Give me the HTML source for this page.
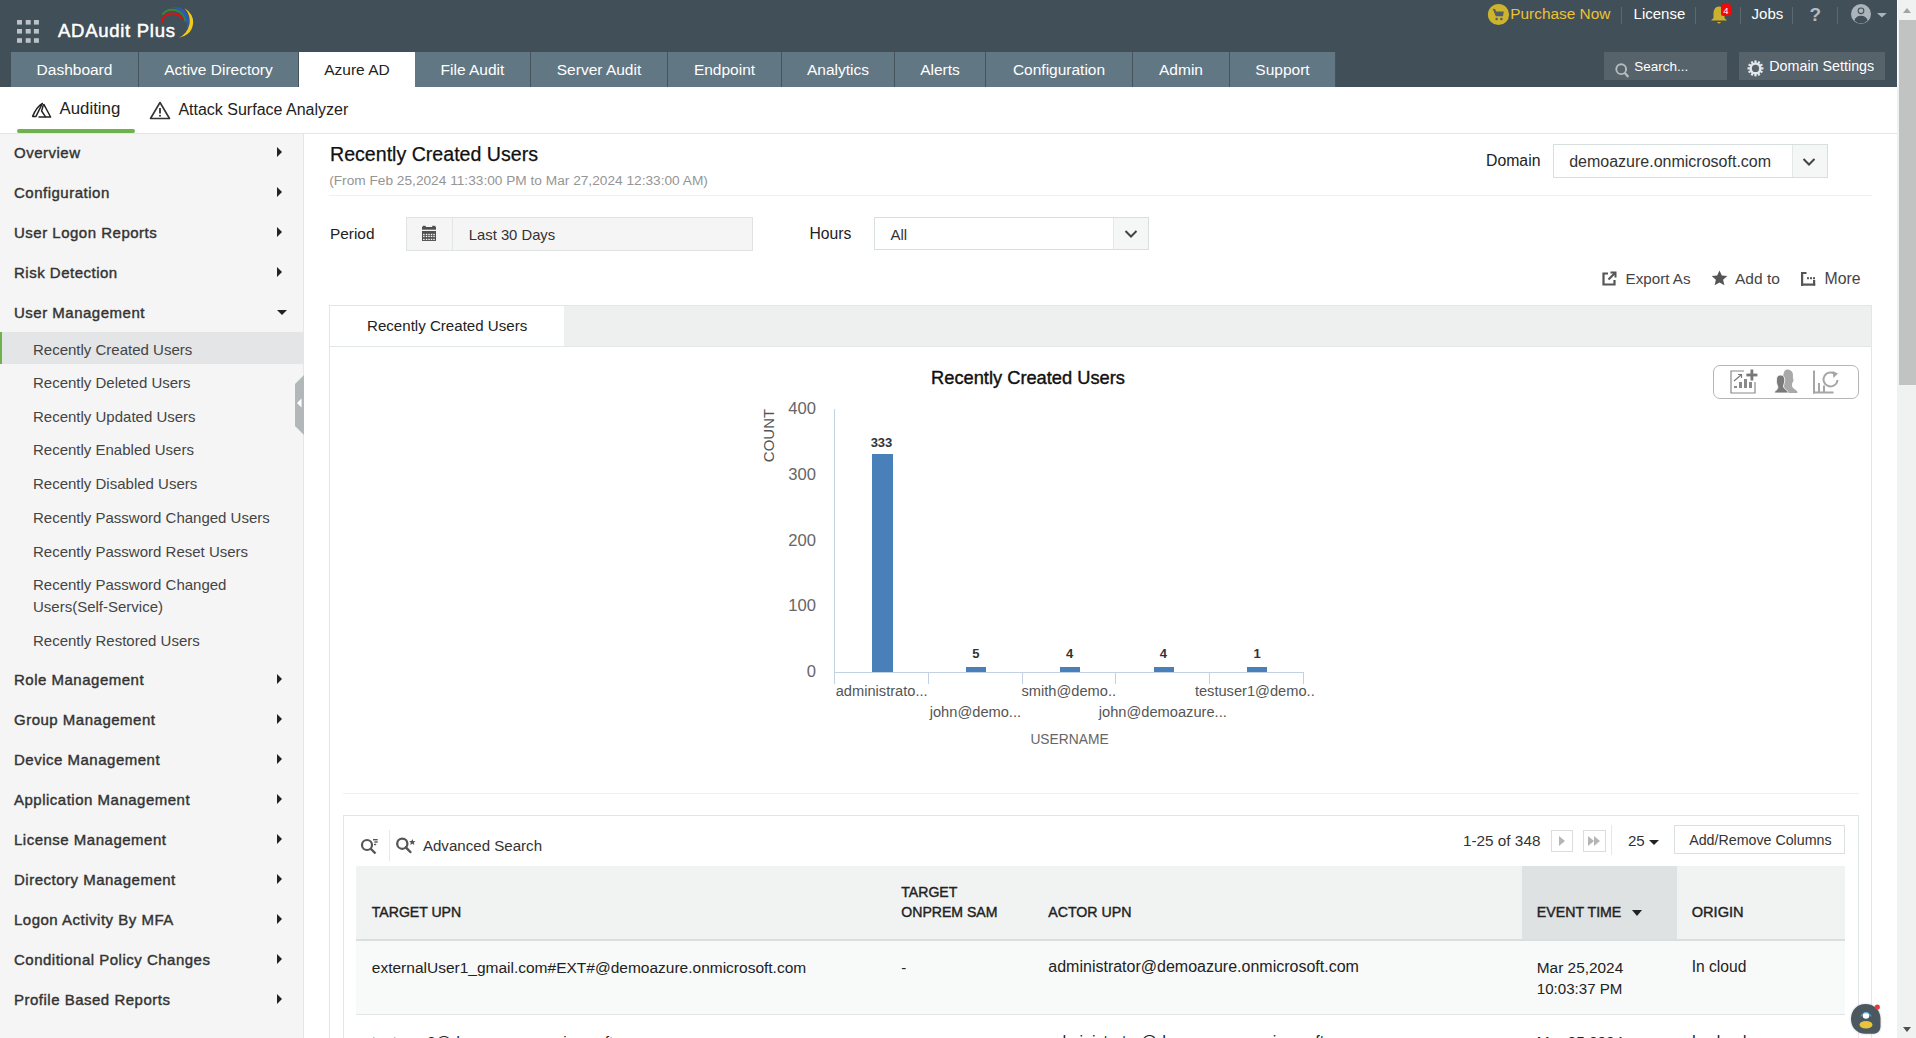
<!DOCTYPE html>
<html><head><meta charset="utf-8">
<style>
*{box-sizing:border-box;margin:0;padding:0}
html,body{width:1916px;height:1038px;overflow:hidden;background:#fff}
body{font-family:"Liberation Sans",sans-serif;position:relative;color:#222}
.a{position:absolute;line-height:1;white-space:nowrap}
.b{position:absolute}
#hdr{position:absolute;left:0;top:0;width:1897px;height:87px;background:#414f58}
.tab{position:absolute;top:52px;height:35px;background:#627784;color:#fff;font-size:15.5px;line-height:1;border-right:1px solid #45535c}
.tab span{position:absolute;top:62.1px;left:0;right:0;text-align:center}
.tab.on{background:#fff;color:#222;border-right:none}
#sb{position:absolute;left:1897px;top:0;width:19px;height:1038px;background:#f0f1f1}
#side{position:absolute;left:0;top:134px;width:304px;height:904px;background:#f5f5f5;border-right:1px solid #e3e7e8}
.arr{position:absolute;left:277px;width:0;height:0;border-top:5px solid transparent;border-bottom:5px solid transparent;border-left:5.5px solid #222}
</style></head>
<body>
<div id="hdr"></div>
<svg class="b" style="left:17px;top:20px" width="22" height="23" viewBox="0 0 22 23" fill="#bcc2c6"><rect x="0" y="0" width="5" height="4.6"/><rect x="8.7" y="0" width="5" height="4.6"/><rect x="16.9" y="0" width="5" height="4.6"/><rect x="0" y="9" width="5" height="4.6"/><rect x="8.7" y="9" width="5" height="4.6"/><rect x="16.9" y="9" width="5" height="4.6"/><rect x="0" y="18.2" width="5" height="4.6"/><rect x="8.7" y="18.2" width="5" height="4.6"/><rect x="16.9" y="18.2" width="5" height="4.6"/></svg>
<div class="a" style="left:58px;top:21.94px;font-size:18.5px;color:#fff;-webkit-text-stroke:0.5px #fff;letter-spacing:0.72px">ADAudit Plus</div>
<svg class="b" style="left:150px;top:0px" width="50" height="45" viewBox="150 0 50 45" fill="none">
<path d="M161.5 22.5 A11.3 11.3 0 0 1 182.3 19" stroke="#e01010" stroke-width="2"/>
<path d="M162.3 14.5 A13.2 13.2 0 0 1 185.5 21.5" stroke="#3a8a34" stroke-width="1.9"/>
<path d="M171.5 7.4 A14.1 14.1 0 0 1 186.4 29.5 A18 18 0 0 0 171.5 7.4Z" fill="#2a5db0"/>
<path d="M184.5 8.2 A15.6 15.6 0 0 1 178.6 37.7 A18.2 18.2 0 0 0 184.5 8.2Z" fill="#f2cc1a"/>
</svg>
<div class="tab" style="left:11px;width:128px"><span style="top:10.08px">Dashboard</span></div>
<div class="tab" style="left:139px;width:160px"><span style="top:10.08px">Active Directory</span></div>
<div class="tab on" style="left:299px;width:116px"><span style="top:10.08px">Azure AD</span></div>
<div class="tab" style="left:415px;width:116px"><span style="top:10.08px">File Audit</span></div>
<div class="tab" style="left:531px;width:137px"><span style="top:10.08px">Server Audit</span></div>
<div class="tab" style="left:668px;width:114px"><span style="top:10.08px">Endpoint</span></div>
<div class="tab" style="left:782px;width:113px"><span style="top:10.08px">Analytics</span></div>
<div class="tab" style="left:895px;width:91px"><span style="top:10.08px">Alerts</span></div>
<div class="tab" style="left:986px;width:147px"><span style="top:10.08px">Configuration</span></div>
<div class="tab" style="left:1133px;width:97px"><span style="top:10.08px">Admin</span></div>
<div class="tab" style="left:1230px;width:106px"><span style="top:10.08px">Support</span></div>
<svg class="b" style="left:1484px;top:0px" width="30" height="30" viewBox="1484 0 30 30">
<circle cx="1498.5" cy="14.5" r="10.6" fill="#cdb42e"/>
<path d="M1493 9.4 L1494.6 10 L1495.6 11.6 L1503.8 11.6 L1503 16.3 L1495.8 16.3 Z" fill="#505d66"/>
<path d="M1493 9.3 L1494.8 9.7 L1495.9 12" stroke="#505d66" stroke-width="1.1" fill="none"/>
<circle cx="1496.6" cy="18.9" r="1.25" fill="#505d66"/><circle cx="1501.4" cy="18.9" r="1.25" fill="#505d66"/>
</svg>
<div class="a" style="left:1510.3px;top:5.96px;font-size:15.4px;color:#ecc232">Purchase Now</div>
<div class="b" style="left:1621px;top:7px;width:1px;height:17px;background:#5c6870"></div>
<div class="a" style="left:1633.6px;top:6.30px;font-size:15px;color:#fff">License</div>
<div class="b" style="left:1695px;top:7px;width:1px;height:17px;background:#5c6870"></div>
<svg class="b" style="left:1710px;top:4px" width="24" height="21" viewBox="0 0 24 21">
<path d="M9 2.5 C4.5 2.5 3.5 7 3.5 10 L3.5 14 L1 16.5 L17 16.5 L14.5 14 L14.5 10 C14.5 7 13.5 2.5 9 2.5Z" fill="#cbb22e"/>
<path d="M7 18 Q9 21 11 18Z" fill="#cbb22e"/>
<rect x="11" y="0" width="10" height="12" rx="2.5" fill="#f00a0a"/>
<text x="16" y="9.8" font-family="Liberation Sans" font-size="9.5" fill="#fff" text-anchor="middle">4</text>
</svg>
<div class="b" style="left:1740px;top:7px;width:1px;height:17px;background:#5c6870"></div>
<div class="a" style="left:1751.6px;top:6.30px;font-size:15px;color:#fff">Jobs</div>
<div class="b" style="left:1792px;top:7px;width:1px;height:17px;background:#5c6870"></div>
<div class="a" style="left:1809.5px;top:5.12px;font-size:19px;color:#b4bcc1;font-weight:bold">?</div>
<div class="b" style="left:1837px;top:7px;width:1px;height:17px;background:#5c6870"></div>
<svg class="b" style="left:1850px;top:4px" width="38" height="21" viewBox="0 0 38 21">
<circle cx="11" cy="10" r="10" fill="#aab4ba"/>
<circle cx="11" cy="6.8" r="3.4" fill="#414f58"/>
<circle cx="11" cy="6.8" r="2.3" fill="#aab4ba"/>
<path d="M4.3 16.6 Q5.8 11.8 11 11.8 Q16.2 11.8 17.7 16.6 Q14.8 19.6 11 19.6 Q7.2 19.6 4.3 16.6Z" fill="#414f58"/>
<path d="M27 9 h9.8 l-4.9 4.6z" fill="#aab4ba"/>
</svg>
<div class="b" style="left:1604px;top:52px;width:123px;height:28px;background:#56636b"></div>
<svg class="b" style="left:1610px;top:58px" width="24" height="24" viewBox="1610 58 24 24">
<circle cx="1621.2" cy="69.2" r="4.9" stroke="#b5bbbe" stroke-width="1.9" fill="none"/>
<path d="M1624.6 72.8 L1628.4 77" stroke="#b5bbbe" stroke-width="2.3"/>
</svg>
<div class="a" style="left:1634.3px;top:59.57px;font-size:13.5px;color:#fff">Search...</div>
<div class="b" style="left:1739px;top:52px;width:146px;height:28px;background:#56636b"></div>
<svg class="b" style="left:1745px;top:58px" width="22" height="22" viewBox="1745 58 22 22">
<g fill="#e4e8ea"><circle cx="1755.5" cy="68.4" r="6"/><rect x="1754.4" y="60.4" width="2.2" height="3" transform="rotate(0 1755.5 68.4)"/><rect x="1754.4" y="60.4" width="2.2" height="3" transform="rotate(30 1755.5 68.4)"/><rect x="1754.4" y="60.4" width="2.2" height="3" transform="rotate(60 1755.5 68.4)"/><rect x="1754.4" y="60.4" width="2.2" height="3" transform="rotate(90 1755.5 68.4)"/><rect x="1754.4" y="60.4" width="2.2" height="3" transform="rotate(120 1755.5 68.4)"/><rect x="1754.4" y="60.4" width="2.2" height="3" transform="rotate(150 1755.5 68.4)"/><rect x="1754.4" y="60.4" width="2.2" height="3" transform="rotate(180 1755.5 68.4)"/><rect x="1754.4" y="60.4" width="2.2" height="3" transform="rotate(210 1755.5 68.4)"/><rect x="1754.4" y="60.4" width="2.2" height="3" transform="rotate(240 1755.5 68.4)"/><rect x="1754.4" y="60.4" width="2.2" height="3" transform="rotate(270 1755.5 68.4)"/><rect x="1754.4" y="60.4" width="2.2" height="3" transform="rotate(300 1755.5 68.4)"/><rect x="1754.4" y="60.4" width="2.2" height="3" transform="rotate(330 1755.5 68.4)"/></g>
<circle cx="1755.5" cy="68.4" r="3.6" fill="#56636b"/>
</svg>
<div class="a" style="left:1769.3px;top:58.90px;font-size:14.3px;color:#fff">Domain Settings</div>
<div class="b" style="left:0;top:133px;width:1897px;height:1px;background:#e3e6e8"></div>
<svg class="b" style="left:28px;top:98px" width="28" height="24" viewBox="28 98 28 24" fill="none" stroke="#222" stroke-width="1.45" stroke-linejoin="round" stroke-linecap="round">
<path d="M32.6 116.4 L36 116.4 L42.4 103.4 Q36.5 107 32.6 116.4 Z"/>
<path d="M44 104.6 L50.6 117 L39 117"/><path d="M45.4 116.6 L41.6 111 L43.4 104.8"/>
</svg>
<div class="a" style="left:59.6px;top:101.08px;font-size:16.8px;color:#222">Auditing</div>
<div class="b" style="left:17px;top:129px;width:118px;height:4px;border-radius:2px;background:#6eb24e"></div>
<svg class="b" style="left:149px;top:101px" width="22" height="19" viewBox="0 0 22 19" fill="none">
<path d="M11 1.5 L20.5 17.5 L1.5 17.5 Z" stroke="#333" stroke-width="1.6" stroke-linejoin="round"/>
<path d="M11 7 V12.5" stroke="#333" stroke-width="1.8"/><circle cx="11" cy="14.8" r="1" fill="#333"/>
</svg>
<div class="a" style="left:178.4px;top:101.76px;font-size:16px;color:#222">Attack Surface Analyzer</div>
<div id="side"></div>
<div class="a" style="left:14px;top:145.30px;font-size:15px;color:#333;-webkit-text-stroke:0.4px #333;letter-spacing:0.5px">Overview</div>
<div class="arr" style="top:147.4px"></div>
<div class="a" style="left:14px;top:185.30px;font-size:15px;color:#333;-webkit-text-stroke:0.4px #333;letter-spacing:0.5px">Configuration</div>
<div class="arr" style="top:187.4px"></div>
<div class="a" style="left:14px;top:225.30px;font-size:15px;color:#333;-webkit-text-stroke:0.4px #333;letter-spacing:0.5px">User Logon Reports</div>
<div class="arr" style="top:227.4px"></div>
<div class="a" style="left:14px;top:265.30px;font-size:15px;color:#333;-webkit-text-stroke:0.4px #333;letter-spacing:0.5px">Risk Detection</div>
<div class="arr" style="top:267.4px"></div>
<div class="a" style="left:14px;top:305.30px;font-size:15px;color:#333;-webkit-text-stroke:0.4px #333;letter-spacing:0.5px">User Management</div>
<div class="b" style="left:277px;top:310px;width:0;height:0;border-left:5.2px solid transparent;border-right:5.2px solid transparent;border-top:5.5px solid #222"></div>
<div class="b" style="left:0;top:332px;width:303px;height:32px;background:#e4e5e6;border-left:2px solid #6eb24e"></div>
<div class="a" style="left:33px;top:341.70px;font-size:15px;color:#444">Recently Created Users</div>
<div class="a" style="left:33px;top:374.90px;font-size:15px;color:#444">Recently Deleted Users</div>
<div class="a" style="left:33px;top:408.60px;font-size:15px;color:#444">Recently Updated Users</div>
<div class="a" style="left:33px;top:442.30px;font-size:15px;color:#444">Recently Enabled Users</div>
<div class="a" style="left:33px;top:476.10px;font-size:15px;color:#444">Recently Disabled Users</div>
<div class="a" style="left:33px;top:509.70px;font-size:15px;color:#444">Recently Password Changed Users</div>
<div class="a" style="left:33px;top:543.50px;font-size:15px;color:#444">Recently Password Reset Users</div>
<div class="a" style="left:33px;top:577.30px;font-size:15px;color:#444">Recently Password Changed</div>
<div class="a" style="left:33px;top:599.30px;font-size:15px;color:#444">Users(Self-Service)</div>
<div class="a" style="left:33px;top:633.30px;font-size:15px;color:#444">Recently Restored Users</div>
<div class="a" style="left:14px;top:672.30px;font-size:15px;color:#333;-webkit-text-stroke:0.4px #333;letter-spacing:0.5px">Role Management</div>
<div class="arr" style="top:674.4px"></div>
<div class="a" style="left:14px;top:712.30px;font-size:15px;color:#333;-webkit-text-stroke:0.4px #333;letter-spacing:0.5px">Group Management</div>
<div class="arr" style="top:714.4px"></div>
<div class="a" style="left:14px;top:752.30px;font-size:15px;color:#333;-webkit-text-stroke:0.4px #333;letter-spacing:0.5px">Device Management</div>
<div class="arr" style="top:754.4px"></div>
<div class="a" style="left:14px;top:792.30px;font-size:15px;color:#333;-webkit-text-stroke:0.4px #333;letter-spacing:0.5px">Application Management</div>
<div class="arr" style="top:794.4px"></div>
<div class="a" style="left:14px;top:832.30px;font-size:15px;color:#333;-webkit-text-stroke:0.4px #333;letter-spacing:0.5px">License Management</div>
<div class="arr" style="top:834.4px"></div>
<div class="a" style="left:14px;top:872.30px;font-size:15px;color:#333;-webkit-text-stroke:0.4px #333;letter-spacing:0.5px">Directory Management</div>
<div class="arr" style="top:874.4px"></div>
<div class="a" style="left:14px;top:912.30px;font-size:15px;color:#333;-webkit-text-stroke:0.4px #333;letter-spacing:0.5px">Logon Activity By MFA</div>
<div class="arr" style="top:914.4px"></div>
<div class="a" style="left:14px;top:952.30px;font-size:15px;color:#333;-webkit-text-stroke:0.4px #333;letter-spacing:0.5px">Conditional Policy Changes</div>
<div class="arr" style="top:954.4px"></div>
<div class="a" style="left:14px;top:992.30px;font-size:15px;color:#333;-webkit-text-stroke:0.4px #333;letter-spacing:0.5px">Profile Based Reports</div>
<div class="arr" style="top:994.4px"></div>
<svg class="b" style="left:295px;top:375px" width="9" height="60" viewBox="0 0 9 60">
<path d="M9 0 L9 60 L0 51 L0 9 Z" fill="#b2b7ba"/>
<path d="M6.5 23.5 L2 28 L6.5 32.5 Z" fill="#fff"/>
</svg>
<div class="a" style="left:330px;top:144.71px;font-size:19.6px;color:#111;-webkit-text-stroke:0.25px #111">Recently Created Users</div>
<div class="a" style="left:329.2px;top:173.70px;font-size:13.7px;color:#959595">(From Feb 25,2024 11:33:00 PM to Mar 27,2024 12:33:00 AM)</div>
<div class="b" style="left:329px;top:195px;width:1543px;height:1px;background:#eef1f1"></div>
<div class="a" style="left:1486px;top:153.13px;font-size:15.8px;color:#222">Domain</div>
<div class="b" style="left:1553px;top:144px;width:275px;height:34px;border:1px solid #d8dfdf;background:#fff"></div>
<div class="b" style="left:1792px;top:145px;width:35px;height:32px;border-left:1px solid #e3e8e8;background:#f5f6f6"></div>
<div class="a" style="left:1569.2px;top:153.66px;font-size:16px;color:#333">demoazure.onmicrosoft.com</div>
<svg class="b" style="left:1802px;top:156.5px" width="14" height="10" viewBox="0 0 14 10"><path d="M1.5 2 L7 7.5 L12.5 2" stroke="#444" stroke-width="2" fill="none"/></svg>
<div class="a" style="left:330px;top:226.06px;font-size:15.4px;color:#222">Period</div>
<div class="b" style="left:406px;top:217px;width:347px;height:34px;border:1px solid #dfe3e3;background:#f5f5f5"></div>
<div class="b" style="left:452px;top:218px;width:1px;height:32px;background:#e3e6e6"></div>
<svg class="b" style="left:422px;top:225px" width="14" height="16" viewBox="0 0 14 16">
<g fill="#505050"><rect x="0.6" y="0.8" width="3.2" height="1.4"/><rect x="10.2" y="0.8" width="3.2" height="1.4"/>
<rect x="0" y="2" width="14" height="2.7"/><rect x="0" y="6" width="14" height="10"/></g>
<g fill="#f5f5f5"><rect x="1.1" y="8.8" width="1.5" height="1.3"/><rect x="3.8" y="8.8" width="1.5" height="1.3"/><rect x="6.3" y="8.8" width="1.5" height="1.3"/><rect x="8.8" y="8.8" width="1.5" height="1.3"/><rect x="11.3" y="8.8" width="1.5" height="1.3"/><rect x="1.1" y="10.8" width="1.5" height="1.3"/><rect x="3.8" y="10.8" width="1.5" height="1.3"/><rect x="6.3" y="10.8" width="1.5" height="1.3"/><rect x="8.8" y="10.8" width="1.5" height="1.3"/><rect x="11.3" y="10.8" width="1.5" height="1.3"/><rect x="1.1" y="13.8" width="1.5" height="1.3"/><rect x="3.8" y="13.8" width="1.5" height="1.3"/><rect x="6.3" y="13.8" width="1.5" height="1.3"/><rect x="8.8" y="13.8" width="1.5" height="1.3"/><rect x="11.3" y="13.8" width="1.5" height="1.3"/></g>
</svg>
<div class="a" style="left:468.8px;top:227.57px;font-size:14.8px;color:#333">Last 30 Days</div>
<div class="a" style="left:809.4px;top:226.21px;font-size:15.7px;color:#222">Hours</div>
<div class="b" style="left:874px;top:217px;width:275px;height:33px;border:1px solid #d8dfdf;background:#fff"></div>
<div class="b" style="left:1113px;top:218px;width:35px;height:31px;border-left:1px solid #e3e8e8;background:#f5f6f6"></div>
<div class="a" style="left:890.4px;top:227.30px;font-size:15px;color:#333">All</div>
<svg class="b" style="left:1124px;top:229px" width="14" height="10" viewBox="0 0 14 10"><path d="M1.5 2 L7 7.5 L12.5 2" stroke="#444" stroke-width="2" fill="none"/></svg>
<svg class="b" style="left:1602px;top:271px" width="15" height="15" viewBox="0 0 15 15" fill="none" stroke="#555" stroke-width="2.2">
<path d="M6 2.5 H1.5 V13.5 H12.5 V9"/><path d="M6.5 8.5 L13 2"/><path d="M8.5 1.5 H13.5 V6.5" stroke-width="2"/>
</svg>
<div class="a" style="left:1625.6px;top:271.13px;font-size:15.2px;color:#444">Export As</div>
<svg class="b" style="left:1711px;top:270px" width="17" height="16" viewBox="0 0 17 16"><path d="M8.5 0.5 L10.8 5.6 L16.3 6.1 L12.1 9.8 L13.4 15.3 L8.5 12.4 L3.6 15.3 L4.9 9.8 L0.7 6.1 L6.2 5.6 Z" fill="#555"/></svg>
<div class="a" style="left:1735px;top:270.88px;font-size:15.5px;color:#444">Add to</div>
<svg class="b" style="left:1801px;top:272px" width="15" height="14" viewBox="0 0 15 14" fill="#555">
<rect x="0" y="0" width="2.2" height="14"/><rect x="0" y="0" width="5.5" height="2"/><rect x="0" y="11.5" width="14.2" height="2.2"/><rect x="12" y="8" width="2.2" height="5.5"/>
<rect x="6" y="5.2" width="2" height="2"/><rect x="9" y="5.2" width="2" height="2"/><rect x="12" y="5.2" width="2" height="2"/>
</svg>
<div class="a" style="left:1824.5px;top:270.63px;font-size:15.8px;color:#444">More</div>
<div class="b" style="left:329px;top:305px;width:1543px;height:740px;border:1px solid #e1e6e7;border-bottom:none;background:#fff"></div>
<div class="b" style="left:564px;top:306px;width:1307px;height:40px;background:#eef0f0"></div>
<div class="b" style="left:330px;top:346px;width:1541px;height:1px;background:#e1e6e6"></div>
<div class="a" style="left:367px;top:318.22px;font-size:15.1px;color:#222">Recently Created Users</div>
<div class="a" style="left:728px;width:600px;text-align:center;top:369.33px;font-size:18.28px;color:#111;-webkit-text-stroke:0.4px #111">Recently Created Users</div>
<div class="b" style="left:834px;top:409px;width:1px;height:275px;background:#c3d2e2"></div>
<div class="b" style="left:834px;top:672px;width:470px;height:1px;background:#c3d2e2"></div>
<div class="b" style="left:928px;top:672px;width:1px;height:12px;background:#c3d2e2"></div>
<div class="b" style="left:1022px;top:672px;width:1px;height:12px;background:#c3d2e2"></div>
<div class="b" style="left:1115px;top:672px;width:1px;height:12px;background:#c3d2e2"></div>
<div class="b" style="left:1209px;top:672px;width:1px;height:12px;background:#c3d2e2"></div>
<div class="b" style="left:1303px;top:672px;width:1px;height:12px;background:#c3d2e2"></div>
<div class="a" style="left:616px;width:200px;text-align:right;top:400.95px;font-size:16.6px;color:#666">400</div>
<div class="a" style="left:616px;width:200px;text-align:right;top:466.75px;font-size:16.6px;color:#666">300</div>
<div class="a" style="left:616px;width:200px;text-align:right;top:532.75px;font-size:16.6px;color:#666">200</div>
<div class="a" style="left:616px;width:200px;text-align:right;top:597.95px;font-size:16.6px;color:#666">100</div>
<div class="a" style="left:616px;width:200px;text-align:right;top:663.95px;font-size:16.6px;color:#666">0</div>
<div class="a" style="left:742.6px;top:428px;width:54px;text-align:center;font-size:15px;color:#555;transform:rotate(-90deg);transform-origin:27px 7.5px;left:741.2px;top:428.3px">COUNT</div>
<div class="b" style="left:872.2px;top:454px;width:20.4px;height:218px;background:#4a80ba"></div>
<div class="b" style="left:966px;top:667px;width:20px;height:5px;background:#4a80ba"></div>
<div class="b" style="left:1060px;top:667px;width:20px;height:5px;background:#4a80ba"></div>
<div class="b" style="left:1153.5px;top:667px;width:20px;height:5px;background:#4a80ba"></div>
<div class="b" style="left:1247px;top:667px;width:20px;height:5px;background:#4a80ba"></div>
<div class="a" style="left:581.5px;width:600px;text-align:center;top:435.80px;font-size:13px;font-weight:bold;color:#333">333</div>
<div class="a" style="left:675.8px;width:600px;text-align:center;top:647.20px;font-size:13px;font-weight:bold;color:#333">5</div>
<div class="a" style="left:769.7px;width:600px;text-align:center;top:647.20px;font-size:13px;font-weight:bold;color:#333">4</div>
<div class="a" style="left:863.4000000000001px;width:600px;text-align:center;top:647.20px;font-size:13px;font-weight:bold;color:#333">4</div>
<div class="a" style="left:957px;width:600px;text-align:center;top:647.20px;font-size:13px;font-weight:bold;color:#333">1</div>
<div class="a" style="left:581.7px;width:600px;text-align:center;top:684.30px;font-size:14.65px;color:#555">administrato...</div>
<div class="a" style="left:675.4px;width:600px;text-align:center;top:705.10px;font-size:14.65px;color:#555">john@demo...</div>
<div class="a" style="left:768.8px;width:600px;text-align:center;top:684.30px;font-size:14.65px;color:#555">smith@demo..</div>
<div class="a" style="left:862.8px;width:600px;text-align:center;top:705.10px;font-size:14.65px;color:#555">john@demoazure...</div>
<div class="a" style="left:954.8px;width:600px;text-align:center;top:684.30px;font-size:14.65px;color:#555">testuser1@demo..</div>
<div class="a" style="left:769.5px;width:600px;text-align:center;top:732.92px;font-size:13.8px;color:#666">USERNAME</div>
<div class="b" style="left:1713px;top:365px;width:146px;height:34px;border:1px solid #b5b5b5;border-radius:7px;background:#fff"></div>
<svg class="b" style="left:1730px;top:369px" width="29" height="26" viewBox="0 0 29 26">
<path d="M14 2 H1 V24 H25 V13" stroke="#8a8a8a" stroke-width="1.2" fill="none"/>
<path d="M4 12 L11 6" stroke="#7a7a7a" stroke-width="1.2"/><path d="M8 5.5 H11.5 V9" stroke="#7a7a7a" stroke-width="1.2" fill="none"/>
<g fill="#8a8a8a"><rect x="4" y="17" width="3" height="2"/><rect x="9" y="13" width="3" height="6"/><rect x="14" y="10" width="3" height="9"/><rect x="19" y="13" width="3" height="6"/></g>
<rect x="20.5" y="0.5" width="2.8" height="11" fill="#777"/><rect x="16.4" y="4.6" width="11" height="2.8" fill="#777"/>
</svg>
<svg class="b" style="left:1774px;top:369px" width="24" height="25" viewBox="0 0 24 25">
<path d="M13 0.5 C17 0.5 19 3 19 6.5 C19 8 18.6 9 19.4 10 C20 12 18.5 13.5 18 15 C17.5 17 18.5 19 21 20.5 C23 21.5 23.5 23 23.5 24 L10 24 L9 12 C9 5 10 0.5 13 0.5Z" fill="#a9a9a9"/>
<path d="M6.5 6 C9.5 6 10.7 8 10.7 11 C10.7 14 9.7 15.5 9.5 17 C9.5 19 11 20 12.5 21 C13.5 22 14 23 14 24 L0.5 24 C0.5 22.5 1.5 21.5 3 20.5 C4 19.5 4 18 3.5 16.5 C2.5 15 2.5 13 2.5 11 C2.5 8 3.5 6 6.5 6Z" fill="#7a7a7a" stroke="#fff" stroke-width="0.8"/>
</svg>
<svg class="b" style="left:1813px;top:370px" width="28" height="24" viewBox="0 0 28 24">
<g fill="#a6a6a6"><rect x="0" y="0.5" width="2" height="23"/><rect x="0" y="21.5" width="20.5" height="2"/><rect x="5" y="13" width="2" height="9"/><rect x="10" y="15.5" width="2" height="6.5"/></g>
<path d="M24.5 10 A7 7 0 1 1 22.5 4.5" stroke="#a6a6a6" stroke-width="2" fill="none"/>
<path d="M19.5 1 L25 3.5 L20.5 8 Z" fill="#a6a6a6"/>
</svg>
<div class="b" style="left:343px;top:793px;width:1516px;height:1px;background:#eef1f1"></div>
<div class="b" style="left:343px;top:815px;width:1516px;height:240px;border:1px solid #e1e6e7;border-bottom:none;background:#fff"></div>
<svg class="b" style="left:360px;top:837px" width="20" height="18" viewBox="0 0 20 18">
<circle cx="7" cy="8" r="5" stroke="#555" stroke-width="2.2" fill="none"/><path d="M10.5 11.5 L15.5 16.5" stroke="#555" stroke-width="2.4"/>
<g fill="#555"><rect x="13" y="2" width="4.7" height="1.4"/><rect x="14.4" y="4.3" width="3.3" height="1.4"/><rect x="14" y="6.8" width="2.2" height="1.4"/></g>
</svg>
<div class="b" style="left:389px;top:830px;width:1px;height:31px;background:#e6e9ea"></div>
<svg class="b" style="left:395px;top:837px" width="23" height="19" viewBox="0 0 23 19">
<circle cx="7.3" cy="6.7" r="5.1" stroke="#555" stroke-width="2.3" fill="none"/><path d="M10.8 10.3 L15.4 15" stroke="#555" stroke-width="2.5" stroke-linecap="round"/>
<path d="M17.30 1.90 L18.18 4.09 L20.53 4.25 L18.73 5.76 L19.30 8.05 L17.30 6.80 L15.30 8.05 L15.87 5.76 L14.07 4.25 L16.42 4.09Z" fill="#555"/>
</svg>
<div class="a" style="left:422.9px;top:837.92px;font-size:15.1px;color:#333">Advanced Search</div>
<div class="a" style="left:1463px;top:832.95px;font-size:15.3px;color:#333">1-25 of 348</div>
<div class="b" style="left:1551px;top:830px;width:22px;height:22px;border:1px solid #dcdcdc;background:#fff"></div>
<div class="b" style="left:1559px;top:836px;width:0;height:0;border-top:5px solid transparent;border-bottom:5px solid transparent;border-left:6px solid #b5b5b5"></div>
<div class="b" style="left:1583px;top:830px;width:23px;height:22px;border:1px solid #dcdcdc;background:#fff"></div>
<div class="b" style="left:1588px;top:836px;width:0;height:0;border-top:5px solid transparent;border-bottom:5px solid transparent;border-left:6px solid #b5b5b5"></div>
<div class="b" style="left:1594px;top:836px;width:0;height:0;border-top:5px solid transparent;border-bottom:5px solid transparent;border-left:6px solid #b5b5b5"></div>
<div class="b" style="left:1611px;top:825px;width:1px;height:30px;background:#e6e9ea"></div>
<div class="a" style="left:1627.9px;top:833.12px;font-size:15.1px;color:#333">25</div>
<div class="b" style="left:1649px;top:839.5px;width:0;height:0;border-left:5px solid transparent;border-right:5px solid transparent;border-top:5px solid #222"></div>
<div class="b" style="left:1674px;top:825px;width:171px;height:29px;border:1px solid #dbe1e2;background:#fff"></div>
<div class="a" style="left:1689.2px;top:832.75px;font-size:14.24px;color:#333">Add/Remove Columns</div>
<div class="b" style="left:356px;top:866px;width:1489px;height:75px;background:#f1f2f2;border-bottom:2px solid #d9dedf"></div>
<div class="b" style="left:1522px;top:866px;width:155px;height:73px;background:#dfe2e3"></div>
<div class="a" style="left:371.8px;top:905.49px;font-size:14.07px;color:#222;-webkit-text-stroke:0.4px #222">TARGET UPN</div>
<div class="a" style="left:901.3px;top:884.79px;font-size:14.07px;color:#222;-webkit-text-stroke:0.4px #222">TARGET</div>
<div class="a" style="left:901.3px;top:905.49px;font-size:14.07px;color:#222;-webkit-text-stroke:0.4px #222">ONPREM SAM</div>
<div class="a" style="left:1048.3px;top:905.41px;font-size:14.17px;color:#222;-webkit-text-stroke:0.4px #222">ACTOR UPN</div>
<div class="a" style="left:1536.8px;top:904.70px;font-size:14.18px;color:#222;-webkit-text-stroke:0.4px #222">EVENT TIME</div>
<div class="b" style="left:1632px;top:909.5px;width:0;height:0;border-left:5.5px solid transparent;border-right:5.5px solid transparent;border-top:6px solid #222"></div>
<div class="a" style="left:1691.7px;top:905.04px;font-size:14.6px;color:#222;-webkit-text-stroke:0.4px #222">ORIGIN</div>
<div class="b" style="left:356px;top:941px;width:1489px;height:74px;background:#f8f9f9;border-bottom:1px solid #e2e5e6"></div>
<div class="a" style="left:371.8px;top:959.58px;font-size:15.5px;color:#222">externalUser1_gmail.com#EXT#@demoazure.onmicrosoft.com</div>
<div class="a" style="left:901.3px;top:960.00px;font-size:15px;color:#222">-</div>
<div class="a" style="left:1048.3px;top:959.16px;font-size:16px;color:#222">administrator@demoazure.onmicrosoft.com</div>
<div class="a" style="left:1536.8px;top:959.76px;font-size:15.4px;color:#222">Mar 25,2024</div>
<div class="a" style="left:1536.8px;top:980.62px;font-size:15.1px;color:#222">10:03:37 PM</div>
<div class="a" style="left:1691.7px;top:959.49px;font-size:15.6px;color:#222">In cloud</div>
<div class="a" style="left:371.8px;top:1034.18px;font-size:15.5px;color:#222">testuser2@demoazure.onmicrosoft.com</div>
<div class="a" style="left:1048.3px;top:1033.76px;font-size:16px;color:#222">administrator@demoazure.onmicrosoft.com</div>
<div class="a" style="left:1536.8px;top:1033.76px;font-size:15.4px;color:#222">Mar 25,2024</div>
<div class="a" style="left:1691.7px;top:1034.09px;font-size:15.6px;color:#222">In cloud</div>
<div id="sb"></div>
<div class="b" style="left:1897px;top:0;width:1px;height:87px;background:#fff"></div>
<div class="b" style="left:1899px;top:20px;width:17px;height:365px;background:#c1c2c2"></div>
<div class="b" style="left:1903px;top:8px;width:0;height:0;border-left:4.5px solid transparent;border-right:4.5px solid transparent;border-bottom:5px solid #a3a3a3"></div>
<div class="b" style="left:1903px;top:1027px;width:0;height:0;border-left:4.5px solid transparent;border-right:4.5px solid transparent;border-top:5px solid #505050"></div>
<svg class="b" style="left:1846px;top:1000px" width="40" height="38" viewBox="0 0 40 38">
<defs><filter id="sh" x="-30%" y="-30%" width="160%" height="160%"><feGaussianBlur stdDeviation="1.2"/></filter></defs>
<path d="M5 19 C5 10 11 4 19.5 4 C28 4 34.5 9 34.5 19 L34.5 27 C34.5 32 31 34 26 34 L19.5 34 C11 34 5 28 5 19Z" fill="#000" opacity="0.18" filter="url(#sh)"/>
<path d="M5 19 C5 10.5 11 4 19.5 4 C28 4 34.5 10 34.5 19 L34.5 26 C34.5 31 31.5 33.8 26.5 33.8 L19.5 33.8 C11 33.8 5 27.5 5 19Z" fill="#4c5860"/>
<circle cx="20" cy="15.5" r="3.3" fill="#fff"/>
<path d="M15 16.5 C15 11.5 25 11.5 25 16.5" stroke="#3da5e0" stroke-width="1" fill="none"/>
<ellipse cx="20" cy="24.8" rx="6.5" ry="3.8" fill="#e8c53a"/>
<circle cx="31.3" cy="7" r="2.6" fill="#e8393b"/>
</svg>
</body></html>
